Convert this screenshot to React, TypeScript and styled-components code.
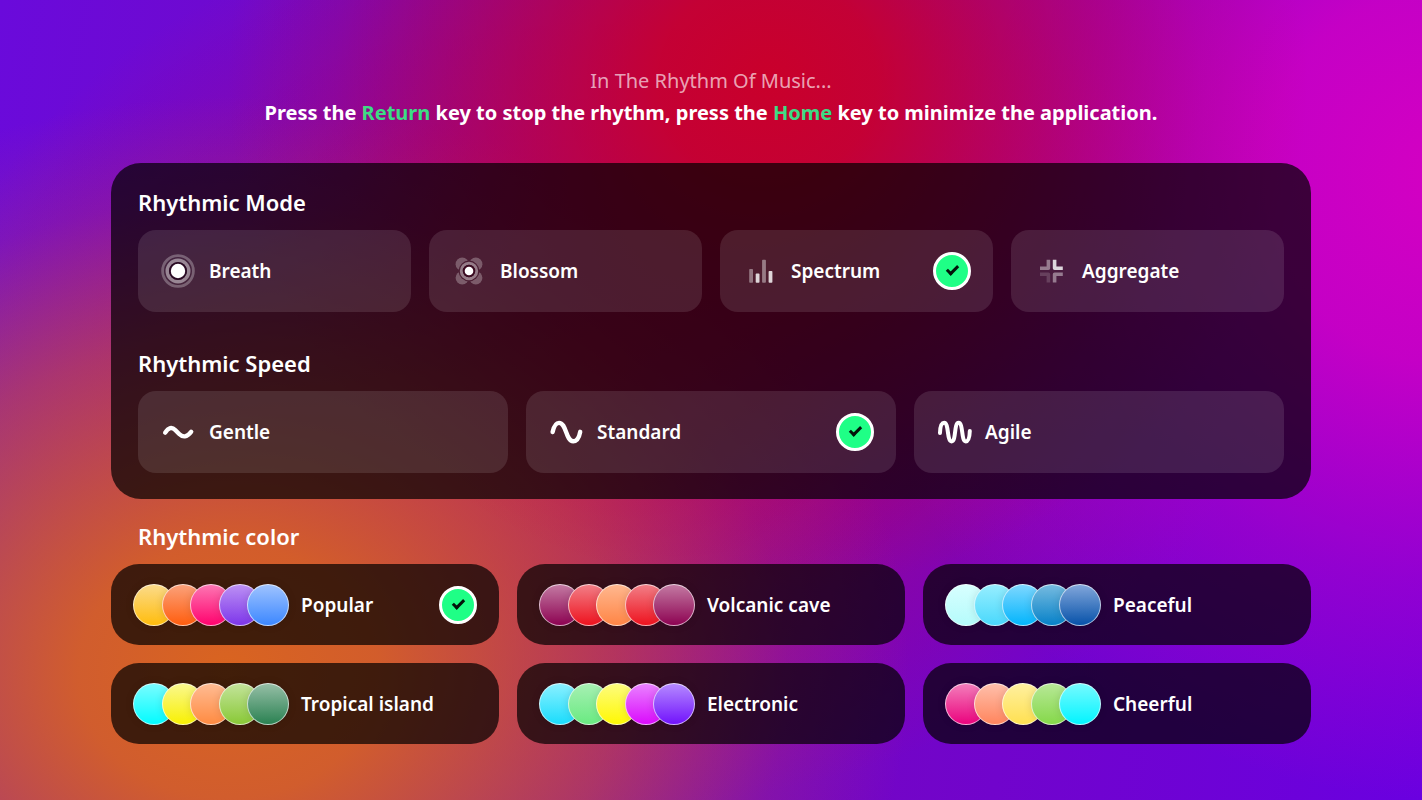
import React, { useId } from "react";
import styled, { createGlobalStyle } from "styled-components";

const GlobalStyle = createGlobalStyle`
  *, *::before, *::after { box-sizing: border-box; }
  html, body, #root { min-height: 100vh; }
  body {
    margin: 0;
    color: #fff;
    font-family: "Noto Sans", "Open Sans", sans-serif;
  }
`;

const Page = styled.main`
  min-height: 100vh;
  padding: 65px 111px 56px;
  background:
    radial-gradient(ellipse 38% 64% at 54% 10%, #c9002b 0%, rgba(201, 0, 43, 0.92) 20%, rgba(201, 0, 43, 0.5) 53%, rgba(201, 0, 43, 0.16) 80%, rgba(201, 0, 43, 0) 100%),
    radial-gradient(ellipse 48% 72% at 16% 84%, #d96420 0%, rgba(217, 100, 32, 0.92) 22%, rgba(213, 90, 40, 0.55) 57%, rgba(210, 80, 50, 0.16) 82%, rgba(210, 80, 50, 0) 100%),
    radial-gradient(ellipse 44% 78% at 102% 22%, #d400c2 0%, rgba(212, 0, 194, 0.85) 30%, rgba(200, 0, 194, 0.42) 65%, rgba(190, 0, 200, 0) 100%),
    radial-gradient(ellipse 46% 56% at 42% 45%, rgba(190, 0, 90, 0.75) 0%, rgba(160, 0, 120, 0) 100%),
    linear-gradient(100deg, #6a0adb 0%, #7808b8 45%, #6a00e0 100%);
`;

const Header = styled.header`
  margin-bottom: 34px;
  text-align: center;
  font-size: 20px;
  line-height: 32px;
`;

const Status = styled.p`
  margin: 0;
  color: rgba(255, 255, 255, 0.65);
  font-weight: 400;
`;

const Hint = styled.h1`
  margin: 0;
  font-size: inherit;
  font-weight: 700;
`;

const Key = styled.span`
  color: #3ddc84;
`;

const Panel = styled.div`
  display: grid;
  gap: 35px;
  padding: 23px 27px 26px;
  border-radius: 30px;
  background: rgba(0, 0, 0, 0.7);
`;

const Section = styled.section<{ $inset?: boolean }>`
  margin-top: ${(p) => (p.$inset ? "21px" : "0")};

  & > h2 {
    padding-left: ${(p) => (p.$inset ? "27px" : "0")};
  }
`;

const Heading = styled.h2`
  margin: 0 0 12px;
  font-size: 22px;
  font-weight: 600;
  line-height: 32px;
`;

const Options = styled.div<{ $columns: number }>`
  display: grid;
  grid-template-columns: repeat(${(p) => p.$columns}, minmax(0, 1fr));
  gap: 18px;
`;

const Option = styled.label<{ $dark?: boolean }>`
  display: flex;
  align-items: center;
  gap: ${(p) => (p.$dark ? "12px" : "13px")};
  height: ${(p) => (p.$dark ? "81px" : "82px")};
  padding: 0 22px;
  border-radius: ${(p) => (p.$dark ? "28px" : "18px")};
  background: ${(p) => (p.$dark ? "rgba(0, 0, 0, 0.7)" : "rgba(255, 255, 255, 0.11)")};
  font-size: 19px;
  font-weight: 600;
  line-height: 28px;
  white-space: nowrap;
  cursor: pointer;
`;

const Radio = styled.input`
  appearance: none;
  display: grid;
  place-items: center;
  flex: none;
  width: 38px;
  height: 38px;
  margin: 0 0 0 auto;
  border-radius: 50%;

  &:checked {
    border: 3px solid #fff;
    background: #1fff86;
  }

  &:checked::after {
    content: "";
    width: 7px;
    height: 12px;
    margin-bottom: 4px;
    border: solid #04140b;
    border-width: 0 3px 3px 0;
    transform: rotate(45deg);
  }
`;

const Icon = styled.svg`
  flex: none;
  width: 36px;
  height: 36px;
  fill: none;
`;

const Swatches = styled.span`
  display: grid;
  grid-template-columns: repeat(4, minmax(0, 1fr)) 42px;
  flex: none;
  width: 156px;
`;

const Swatch = styled.span<{ $from: string; $to: string }>`
  width: 42px;
  height: 42px;
  border: 1px solid rgba(255, 255, 255, 0.65);
  border-radius: 50%;
  background: linear-gradient(${(p) => p.$from}, ${(p) => p.$to}) border-box;
  box-shadow: 0 0 8px rgba(0, 0, 0, 0.12);
`;

const BreathIcon = () => (
  <Icon viewBox="0 0 36 36" aria-hidden="true">
    <circle cx="18" cy="18" r="15.4" stroke="#fff" strokeOpacity=".28" strokeWidth="2.8" />
    <circle cx="18" cy="18" r="10.8" stroke="#fff" strokeOpacity=".45" strokeWidth="3.4" />
    <circle cx="18" cy="18" r="8" stroke="#2a0a24" strokeWidth="2" />
    <circle cx="18" cy="18" r="7.2" fill="#fff" />
  </Icon>
);

const BlossomIcon = () => (
  <Icon viewBox="0 0 36 36" aria-hidden="true">
    <mask id="petals">
      <rect width="36" height="36" fill="#000" />
      <circle cx="11.2" cy="11.2" r="6.6" fill="#fff" />
      <circle cx="24.8" cy="11.2" r="6.6" fill="#fff" />
      <circle cx="11.2" cy="24.8" r="6.6" fill="#fff" />
      <circle cx="24.8" cy="24.8" r="6.6" fill="#fff" />
      <circle cx="18" cy="18" r="10.4" fill="#000" />
    </mask>
    <rect width="36" height="36" fill="#fff" fillOpacity=".27" mask="url(#petals)" />
    <circle cx="18" cy="18" r="7.7" stroke="#fff" strokeOpacity=".42" strokeWidth="3" />
    <circle cx="18" cy="18" r="5.2" stroke="#3a0a20" strokeWidth="2" />
    <circle cx="18" cy="18" r="4.3" fill="#fff" />
  </Icon>
);

const SpectrumIcon = () => (
  <Icon viewBox="0 0 36 36" aria-hidden="true">
    <g fill="#fff">
      <rect x="7.2" y="16" width="3.8" height="13.7" rx=".8" opacity=".4" />
      <rect x="13.7" y="20.6" width="3.8" height="9.1" rx=".8" opacity=".82" />
      <rect x="20.1" y="6.7" width="3.8" height="23" rx=".8" opacity=".42" />
      <rect x="26.6" y="18" width="3.8" height="11.7" rx=".8" opacity=".82" />
    </g>
  </Icon>
);

const AggregateIcon = () => (
  <Icon viewBox="0 0 36 36" aria-hidden="true">
    <g stroke="#fff" strokeWidth="3.6" strokeLinejoin="round">
      <path d="M21.6 6.7V15.2H29.8" opacity=".82" />
      <path d="M15.4 6.7V15.2H7" opacity=".42" />
      <path d="M15.4 29.6V21.2H7" opacity=".16" />
      <path d="M21.6 29.6V21.2H29.8" opacity=".42" />
    </g>
  </Icon>
);

const WaveIcon = ({ d, width = 4.4 }: { d: string; width?: number }) => (
  <Icon viewBox="0 0 36 36" aria-hidden="true">
    <path d={d} stroke="#fff" strokeWidth={width} strokeLinecap="round" strokeLinejoin="round" />
  </Icon>
);

const modes = [
  { name: "Breath", art: <BreathIcon /> },
  { name: "Blossom", art: <BlossomIcon /> },
  { name: "Spectrum", art: <SpectrumIcon /> },
  { name: "Aggregate", art: <AggregateIcon /> },
];

const speeds = [
  { name: "Gentle", art: <WaveIcon d="M5.2 18.6C8.6 13.2 12 12.8 15.2 16L19.2 20C22.6 23.4 27 23.6 31.2 17.8" /> },
  { name: "Standard", art: <WaveIcon d="M4.6 18C6 12 8.2 8.9 11 8.9C18.6 8.9 17.6 27.2 25.2 27.2C28.6 27.2 31 24.2 32.2 17.8" /> },
  { name: "Agile", art: <WaveIcon width={4} d="M4 19C4.2 12 5.6 8.8 8.2 8.8C13 8.8 10.8 27.4 15.6 27.4C20.4 27.4 17.8 8.8 22.6 8.8C27.4 8.8 25 27.4 29.8 27.4C32.6 27.4 33.6 23.6 33.8 17" /> },
];

type Shade = [string, string];

const palettes: { name: string; shades: Shade[] }[] = [
  { name: "Popular", shades: [["#fbdb8c", "#ffbc0a"], ["#fba27c", "#ff5c0c"], ["#fd78b4", "#ff006c"], ["#bd92f4", "#7c34ea"], ["#a0c4ff", "#3a86ff"]] },
  { name: "Volcanic cave", shades: [["#c47ca4", "#8c0050"], ["#f28088", "#ee101c"], ["#ffb890", "#ff8444"], ["#f28088", "#ee101c"], ["#c47ca4", "#8c0050"]] },
  { name: "Peaceful", shades: [["#d8ffff", "#b4fbfb"], ["#98eeff", "#48d8fc"], ["#80d8ff", "#00b4fc"], ["#78bce0", "#0480c8"], ["#84a8dc", "#0450a8"]] },
  { name: "Tropical island", shades: [["#7cfcff", "#00fcff"], ["#faf890", "#f8f000"], ["#ffbc94", "#ff8a40"], ["#c4e49c", "#88c834"], ["#98c0a8", "#288050"]] },
  { name: "Electronic", shades: [["#8cf0ff", "#18dcfc"], ["#a8f0b4", "#68ea80"], ["#fdfc80", "#fff800"], ["#ea84ff", "#da08fc"], ["#b68cff", "#7010fc"]] },
  { name: "Cheerful", shades: [["#f480bc", "#ea007c"], ["#ffc0ac", "#ff845c"], ["#fff0a0", "#ffe050"], ["#b8e898", "#84d848"], ["#78faff", "#00f4ff"]] },
];

type Choice = { name: string; art: React.ReactNode };

function ChoiceGroup({ title, choices, selected, columns, dark }: {
  title: string;
  choices: Choice[];
  selected: string;
  columns: number;
  dark?: boolean;
}) {
  const id = useId();
  return (
    <Section $inset={dark}>
      <Heading id={id}>{title}</Heading>
      <Options $columns={columns} role="radiogroup" aria-labelledby={id}>
        {choices.map((choice) => (
          <Option key={choice.name} $dark={dark}>
            {choice.art}
            <span>{choice.name}</span>
            <Radio type="radio" name={id} value={choice.name} defaultChecked={choice.name === selected} />
          </Option>
        ))}
      </Options>
    </Section>
  );
}

const colors: Choice[] = palettes.map(({ name, shades }) => ({
  name,
  art: (
    <Swatches aria-hidden="true">
      {shades.map(([from, to], i) => (
        <Swatch key={i} $from={from} $to={to} />
      ))}
    </Swatches>
  ),
}));

export default function App() {
  return (
    <>
      <GlobalStyle />
      <Page>
        <Header>
          <Status>In The Rhythm Of Music...</Status>
          <Hint>
            Press the <Key>Return</Key> key to stop the rhythm, press the <Key>Home</Key> key to minimize the application.
          </Hint>
        </Header>
        <Panel>
          <ChoiceGroup title="Rhythmic Mode" choices={modes} selected="Spectrum" columns={4} />
          <ChoiceGroup title="Rhythmic Speed" choices={speeds} selected="Standard" columns={3} />
        </Panel>
        <ChoiceGroup title="Rhythmic color" choices={colors} selected="Popular" columns={3} dark />
      </Page>
    </>
  );
}
